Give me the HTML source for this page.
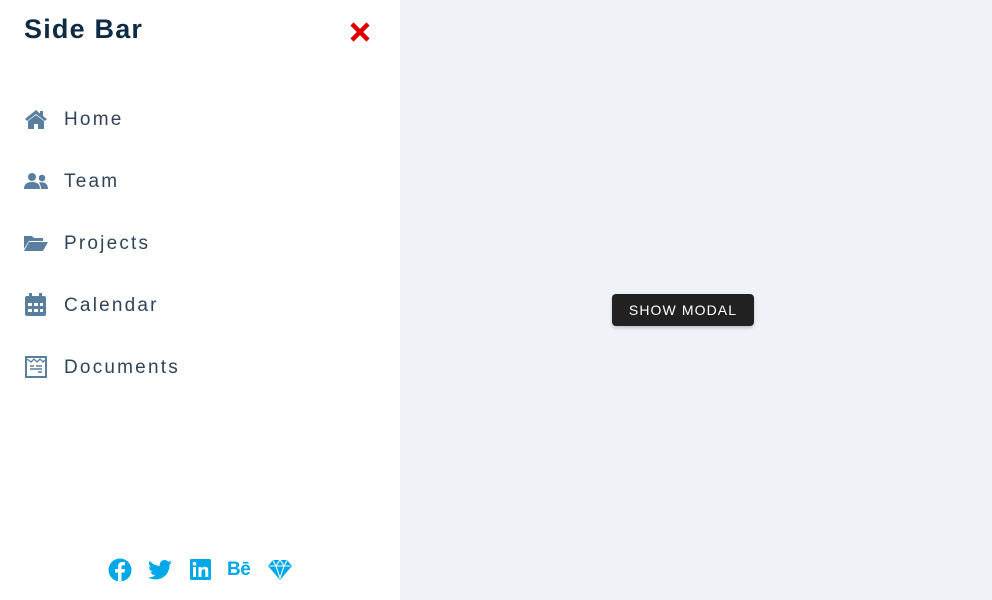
<!DOCTYPE html>
<html><head><style>
body{margin:0;width:992px;height:600px;background:#eff3f7;font-family:"Liberation Sans",sans-serif;position:relative;overflow:hidden}
.sb{position:absolute;left:0;top:0;width:400px;height:600px;background:#fff}
.t{position:absolute;left:24px;top:14px;font-size:27px;font-weight:bold;color:#0d2b45;letter-spacing:1.2px}
.x{position:absolute;left:349px;top:21px}
.item{position:absolute;left:24px;height:24px;display:flex;align-items:center}
.item span{position:absolute;left:40px;top:2px;font-size:19px;color:#2f4458;letter-spacing:2.2px;white-space:nowrap}
.soc{position:absolute;top:558px;}
.btn{position:absolute;left:612px;top:294px;width:142px;height:32px;background:#212121;border-radius:4px;color:#fff;font-size:14px;letter-spacing:1.1px;text-align:center;line-height:32px;box-shadow:0 2px 3px rgba(0,0,0,.2)}
</style></head><body>
<div class="sb">
<div class="t">Side Bar</div>
<svg class="x" width="22" height="22" viewBox="0 0 22 22"><path d="M3 3L19 19M19 3L3 19" stroke="#d00" stroke-width="4.5"/></svg>
<div class="item" style="top:107px"><svg width="24" height="20" viewBox="0 0 24 20"><path d="M12 1L1 10l2 2 9-7 9 7 2-2-4-3V2h-3v2.5z" fill="#5a7f9e"/><path d="M4 12l8-6 8 6v8h-6v-5h-4v5H4z" fill="#5a7f9e"/></svg><span>Home</span></div>
<div class="item" style="top:169px"><svg width="24" height="20" viewBox="0 0 24 20"><circle cx="8" cy="6" r="4" fill="#5a7f9e"/><circle cx="18" cy="7" r="3.3" fill="#5a7f9e"/><path d="M0 18c0-5 3-7 8-7s8 2 8 7z" fill="#5a7f9e"/><path d="M15 11.5c5-1 9 1 9 6.5h-7c0-3-1-5-2-6.5z" fill="#5a7f9e"/></svg><span>Team</span></div>
<div class="item" style="top:231px"><svg width="24" height="20" viewBox="0 0 24 20"><path d="M0 3h8l2 2h9v3H5L0 16z" fill="#5a7f9e"/><path d="M5 9h19l-5 9H0z" fill="#5a7f9e"/></svg><span>Projects</span></div>
<div class="item" style="top:293px"><svg width="24" height="24" viewBox="0 0 24 24"><rect x="1" y="3" width="21" height="20" rx="2" fill="#5a7f9e"/><rect x="5" y="0" width="3" height="5" fill="#5a7f9e"/><rect x="15" y="0" width="3" height="5" fill="#5a7f9e"/><g fill="#fff"><rect x="4" y="10" width="4" height="3"/><rect x="10" y="10" width="4" height="3"/><rect x="16" y="10" width="3" height="3"/><rect x="4" y="16" width="4" height="3"/><rect x="10" y="16" width="4" height="3"/><rect x="16" y="16" width="3" height="3"/></g></svg><span>Calendar</span></div>
<div class="item" style="top:355px"><svg width="24" height="24" viewBox="0 0 24 24"><rect x="2" y="2" width="20" height="20" fill="none" stroke="#5a7f9e" stroke-width="2"/><path d="M3 4l4 3 3-3 3 3 3-3 3 3 2-2" fill="none" stroke="#5a7f9e" stroke-width="1.3"/><path d="M6 11h4M12 11h6M6 14h12M14 17h4" stroke="#5a7f9e" stroke-width="1.6"/></svg><span>Documents</span></div>
<svg class="soc" style="left:108px" width="24" height="24" viewBox="0 0 24 24"><circle cx="12" cy="12" r="11.5" fill="#00a8e8"/><path d="M13.5 24V14.5h3l.5-3.5h-3.5V9c0-1 .4-1.7 1.8-1.7H17V4.2c-.4 0-1.5-.2-2.7-.2-2.6 0-4.3 1.6-4.3 4.4V11H7v3.5h3V24z" fill="#fff"/></svg>
<svg class="soc" style="left:148px;top:559px" width="24" height="22" viewBox="0 0 24 20"><path d="M24 2.3a9.8 9.8 0 0 1-2.8.8A5 5 0 0 0 23.3.4a9.8 9.8 0 0 1-3.1 1.2A4.9 4.9 0 0 0 11.8 6 14 14 0 0 1 1.7.9a4.9 4.9 0 0 0 1.5 6.6 4.9 4.9 0 0 1-2.2-.6 4.9 4.9 0 0 0 3.900 4.9 4.9 4.9 0 0 1-2.2.1 4.9 4.9 0 0 0 4.6 3.4A9.9 9.9 0 0 1 0 17.3 14 14 0 0 0 7.5 19.5c9.1 0 14-7.5 14-14v-.6A10 10 0 0 0 24 2.3z" fill="#00a8e8"/></svg>
<svg class="soc" style="left:190px;top:559px" width="21" height="21" viewBox="0 0 21 21"><rect width="21" height="21" rx="1.5" fill="#00a8e8"/><rect x="3" y="8" width="3" height="10" fill="#fff"/><circle cx="4.5" cy="4.7" r="1.8" fill="#fff"/><path d="M8.5 8h3v1.5c.6-1 1.8-1.8 3.4-1.8 2.6 0 3.4 1.7 3.4 4.3V18h-3v-5.5c0-1.3-.3-2.3-1.6-2.3s-2.2 1-2.2 2.3V18h-3z" fill="#fff"/></svg>
<div class="soc" style="left:227px;top:559px;font-size:19px;font-weight:bold;color:#00a8e8;letter-spacing:-0.5px">Bē</div>
<svg class="soc" style="left:268px;top:559px" width="24" height="22" viewBox="0 0 24 22"><path d="M5 1h14l5 6-12 14L0 7z" fill="#00a8e8"/><path d="M1.5 7h21M8 7l4 12 4-12M5 1.5l3 5.5 4-6 4 6 3-5.5" fill="none" stroke="#fff" stroke-width="1.1"/></svg>
</div>
<div class="btn">SHOW MODAL</div>
</body></html>
